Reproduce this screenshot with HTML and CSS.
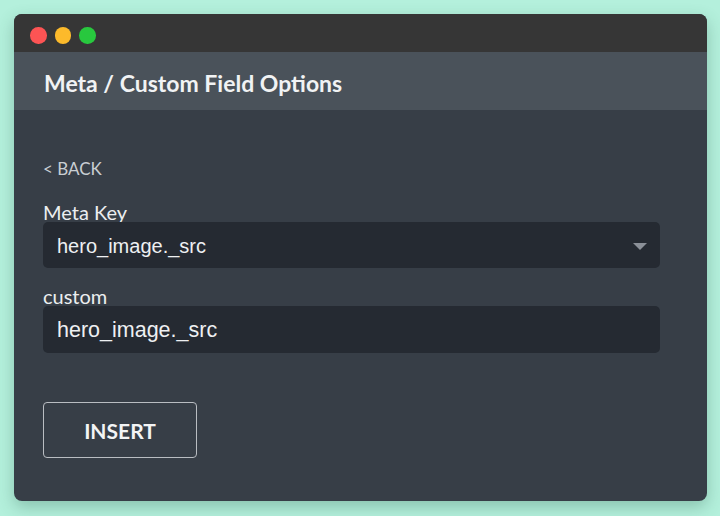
FILE: index.html
```html
<!DOCTYPE html>
<html>
<head>
<meta charset="utf-8">
<link rel="stylesheet" href="styles.css">
</head>
<body>
<div class="window">
  <div class="titlebar">
    <span class="dot red"></span>
    <span class="dot yellow"></span>
    <span class="dot green"></span>
  </div>
  <div class="header">Meta / Custom Field Options</div>
  <div class="content">
    <div class="back">&lt; BACK</div>
    <div class="label first">Meta Key</div>
    <div class="select">
      <span class="value">hero_image._src</span>
      <svg class="caret" width="14" height="7" viewBox="0 0 14 7"><path d="M0 0 L14 0 L7 7 Z" fill="#8b9098"/></svg>
    </div>
    <div class="label second">custom</div>
    <div class="input"><span class="value big">hero_image._src</span></div>
    <button class="insert">INSERT</button>
  </div>
</div>
</body>
</html>
```
FILE: styles.css
```css
html, body {
  margin: 0;
  padding: 0;
}
body {
  background: #b4f0dc;
  width: 720px;
  height: 516px;
  padding: 14px 13px 15px 14px;
  box-sizing: border-box;
  font-family: Lato, "Open Sans", sans-serif;
}
.window {
  width: 693px;
  height: 487px;
  border-radius: 8px;
  overflow: hidden;
  background: #373e47;
  box-shadow: 0 6px 16px rgba(40, 90, 70, 0.3);
  display: flex;
  flex-direction: column;
}
.titlebar {
  height: 38px;
  background: #363636;
  display: flex;
  align-items: flex-start;
  padding: 13px 0 0 16px;
  box-sizing: border-box;
  gap: 8px;
}
.dot {
  width: 16.5px;
  height: 16.5px;
  border-radius: 50%;
}
.red { background: #fd5454; }
.yellow { background: #fcba2b; }
.green { background: #28c83e; }
.header {
  height: 58px;
  background: #4a525a;
  color: #f1f3f4;
  font-weight: 700;
  font-size: 23px;
  padding-left: 30px;
  display: flex;
  align-items: center;
  padding-top: 3px;
  box-sizing: border-box;
}
.content {
  padding: 47px 47px 0 29px;
  display: flex;
  flex-direction: column;
  align-items: flex-start;
}
.back {
  color: #c9ced3;
  font-size: 17px;
  line-height: 24px;
}
.label {
  color: #eceef0;
  font-size: 20px;
  line-height: 18px;
}
.label.first {
  margin-top: 22px;
}
.label.second {
  margin-top: 19px;
}
.select, .input {
  width: 617px;
  height: 46px;
  background: #252a32;
  border-radius: 5px;
  display: flex;
  align-items: center;
  justify-content: space-between;
  padding: 0 13px 0 14px;
  box-sizing: border-box;
  margin-top: 1px;
}
.input {
  height: 47px;
}
.value {
  font-family: "Liberation Sans", Arial, sans-serif;
  color: #eef0f2;
  font-size: 20px;
  padding-top: 2px;
}
.value.big {
  font-size: 21.5px;
}
.caret {
  margin-top: 2px;
}
.insert {
  margin-top: 49px;
  width: 154px;
  height: 56px;
  background: transparent;
  border: 1.5px solid #b9bdc2;
  border-radius: 4px;
  color: #f3f4f5;
  font-family: Lato, "Open Sans", sans-serif;
  font-weight: 700;
  font-size: 21px;
  padding: 0;
}
```
